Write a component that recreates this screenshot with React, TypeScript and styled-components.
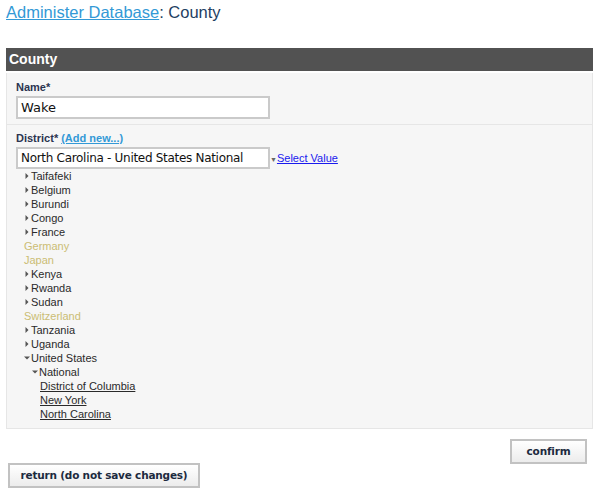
import React from "react";
import styled, { createGlobalStyle } from "styled-components";

const Global = createGlobalStyle`
  html, body { margin: 0; padding: 0; background: #fff; }
  body { font-family: "Liberation Sans", Arial, sans-serif; }
`;

const Page = styled.div`
  width: 595px;
  padding: 3px 2px 0 6px;
  box-sizing: border-box;
`;

const Title = styled.h1`
  margin: 0;
  font: 400 16.5px/18px "Liberation Sans", Arial, sans-serif;
  color: #1f3f63;
  height: 45px;
`;

const TitleLink = styled.a`
  color: #3399d6;
  text-decoration: underline;
`;

const HeaderBar = styled.div`
  height: 23px;
  background: #525252;
  color: #fff;
  font: 700 14px/23px "Liberation Sans", Arial, sans-serif;
  padding-left: 3px;
  margin-bottom: 2px;
`;

const Panel = styled.div`
  background: #f6f6f6;
  border: 1px solid #e6e6e6;
  border-top: none;
`;

const Field = styled.div<{ $last?: boolean }>`
  padding: ${(p) => (p.$last ? "6px 10px 7px 9px" : "7px 10px 5px 9px")};
  border-bottom: ${(p) => (p.$last ? "none" : "1px solid #e6e6e6")};
`;

const Label = styled.div`
  font: 700 11px/14px "Liberation Sans", Arial, sans-serif;
  color: #2b3450;
  margin-bottom: 2px;
`;

const AddLink = styled.a`
  color: #3399d6;
  text-decoration: underline;
  margin-left: 3px;
`;

const TextInput = styled.div`
  width: 254px;
  height: 23px;
  box-sizing: border-box;
  border: 2px solid #cacaca;
  background: #fff;
  font: 400 13px/19px "DejaVu Sans", Verdana, sans-serif;
  color: #111;
  padding-left: 3px;
`;

const SelectRow = styled.div`
  display: flex;
  align-items: center;
`;

const SelectBox = styled.div`
  width: 254px;
  height: 22px;
  box-sizing: border-box;
  border: 2px solid #cacaca;
  background: #fff;
  font: 400 12px/18px "DejaVu Sans", Verdana, sans-serif;
  letter-spacing: -0.3px;
  color: #111;
  padding-left: 3px;
  white-space: nowrap;
  overflow: hidden;
`;

const Caret = styled.span`
  font-size: 7px;
  color: #666;
  margin-top: 2px;
`;

const SelectValue = styled.a`
  font: 400 11px/14px "Liberation Sans", Arial, sans-serif;
  color: #1a1aee;
  text-decoration: underline;
`;

const Tree = styled.ul`
  list-style: none;
  margin: 0;
  padding: 0;
`;

const Node = styled.li<{ $depth: number; $state: "closed" | "open" | "disabled" | "leaf" }>`
  font: 400 11px/14px "Liberation Sans", Arial, sans-serif;
  height: 14px;
  padding-left: ${(p) => 8 + p.$depth * 8 + (p.$state === "leaf" ? 8 : 0)}px;
  color: ${(p) => (p.$state === "disabled" ? "#cbbd74" : "#2a2a2a")};
  text-decoration: ${(p) => (p.$state === "leaf" ? "underline" : "none")};
  display: flex;
  align-items: center;
`;

const Tri = styled.svg`
  width: 6px;
  height: 6px;
  margin-right: 1px;
  flex: none;
`;

const Actions = styled.div`
  display: flex;
  flex-direction: column;
`;

const ButtonRow = styled.div<{ $align: "start" | "end" }>`
  display: flex;
  justify-content: ${(p) => (p.$align === "end" ? "flex-end" : "flex-start")};
`;

const Button = styled.button`
  height: 25px;
  border: 2px solid #c2c2c2;
  background: linear-gradient(#ffffff, #ececec);
  font: 700 10.5px/1 "DejaVu Sans", Verdana, sans-serif;
  letter-spacing: -0.2px;
  color: #1c2a3e;
  padding: 0;
  white-space: nowrap;
  cursor: pointer;
`;

const ConfirmButton = styled(Button)`
  width: 77px;
  margin: 10px 6px 0 0;
`;

const ReturnButton = styled(Button)`
  width: 192px;
  margin: -1px 0 0 2px;
`;

type Item = { label: string; depth: number; state: "closed" | "open" | "disabled" | "leaf" };

const items: Item[] = [
  { label: "Taifafeki", depth: 0, state: "closed" },
  { label: "Belgium", depth: 0, state: "closed" },
  { label: "Burundi", depth: 0, state: "closed" },
  { label: "Congo", depth: 0, state: "closed" },
  { label: "France", depth: 0, state: "closed" },
  { label: "Germany", depth: 0, state: "disabled" },
  { label: "Japan", depth: 0, state: "disabled" },
  { label: "Kenya", depth: 0, state: "closed" },
  { label: "Rwanda", depth: 0, state: "closed" },
  { label: "Sudan", depth: 0, state: "closed" },
  { label: "Switzerland", depth: 0, state: "disabled" },
  { label: "Tanzania", depth: 0, state: "closed" },
  { label: "Uganda", depth: 0, state: "closed" },
  { label: "United States", depth: 0, state: "open" },
  { label: "National", depth: 1, state: "open" },
  { label: "District of Columbia", depth: 1, state: "leaf" },
  { label: "New York", depth: 1, state: "leaf" },
  { label: "North Carolina", depth: 1, state: "leaf" },
];

function Triangle({ open }: { open: boolean }) {
  return (
    <Tri viewBox="0 0 6 6">
      {open ? <polygon points="0,1.5 6,1.5 3,4.5" fill="#555" /> : <polygon points="1.5,0 4.5,3 1.5,6" fill="#555" />}
    </Tri>
  );
}

export default function App() {
  return (
    <>
      <Global />
      <Page>
        <Title>
          <TitleLink>Administer Database</TitleLink>: County
        </Title>
        <HeaderBar>County</HeaderBar>
        <Panel>
          <Field>
            <Label>Name*</Label>
            <TextInput>Wake</TextInput>
          </Field>
          <Field $last>
            <Label>
              District*<AddLink>(Add new...)</AddLink>
            </Label>
            <SelectRow>
              <SelectBox>North Carolina - United States National</SelectBox>
              <Caret>▼</Caret>
              <SelectValue>Select Value</SelectValue>
            </SelectRow>
            <Tree>
              {items.map((it) => (
                <Node key={it.label} $depth={it.depth} $state={it.state}>
                  {(it.state === "closed" || it.state === "open") && <Triangle open={it.state === "open"} />}
                  {it.label}
                </Node>
              ))}
            </Tree>
          </Field>
        </Panel>
        <Actions>
          <ButtonRow $align="end">
            <ConfirmButton>confirm</ConfirmButton>
          </ButtonRow>
          <ButtonRow $align="start">
            <ReturnButton>return (do not save changes)</ReturnButton>
          </ButtonRow>
        </Actions>
      </Page>
    </>
  );
}
